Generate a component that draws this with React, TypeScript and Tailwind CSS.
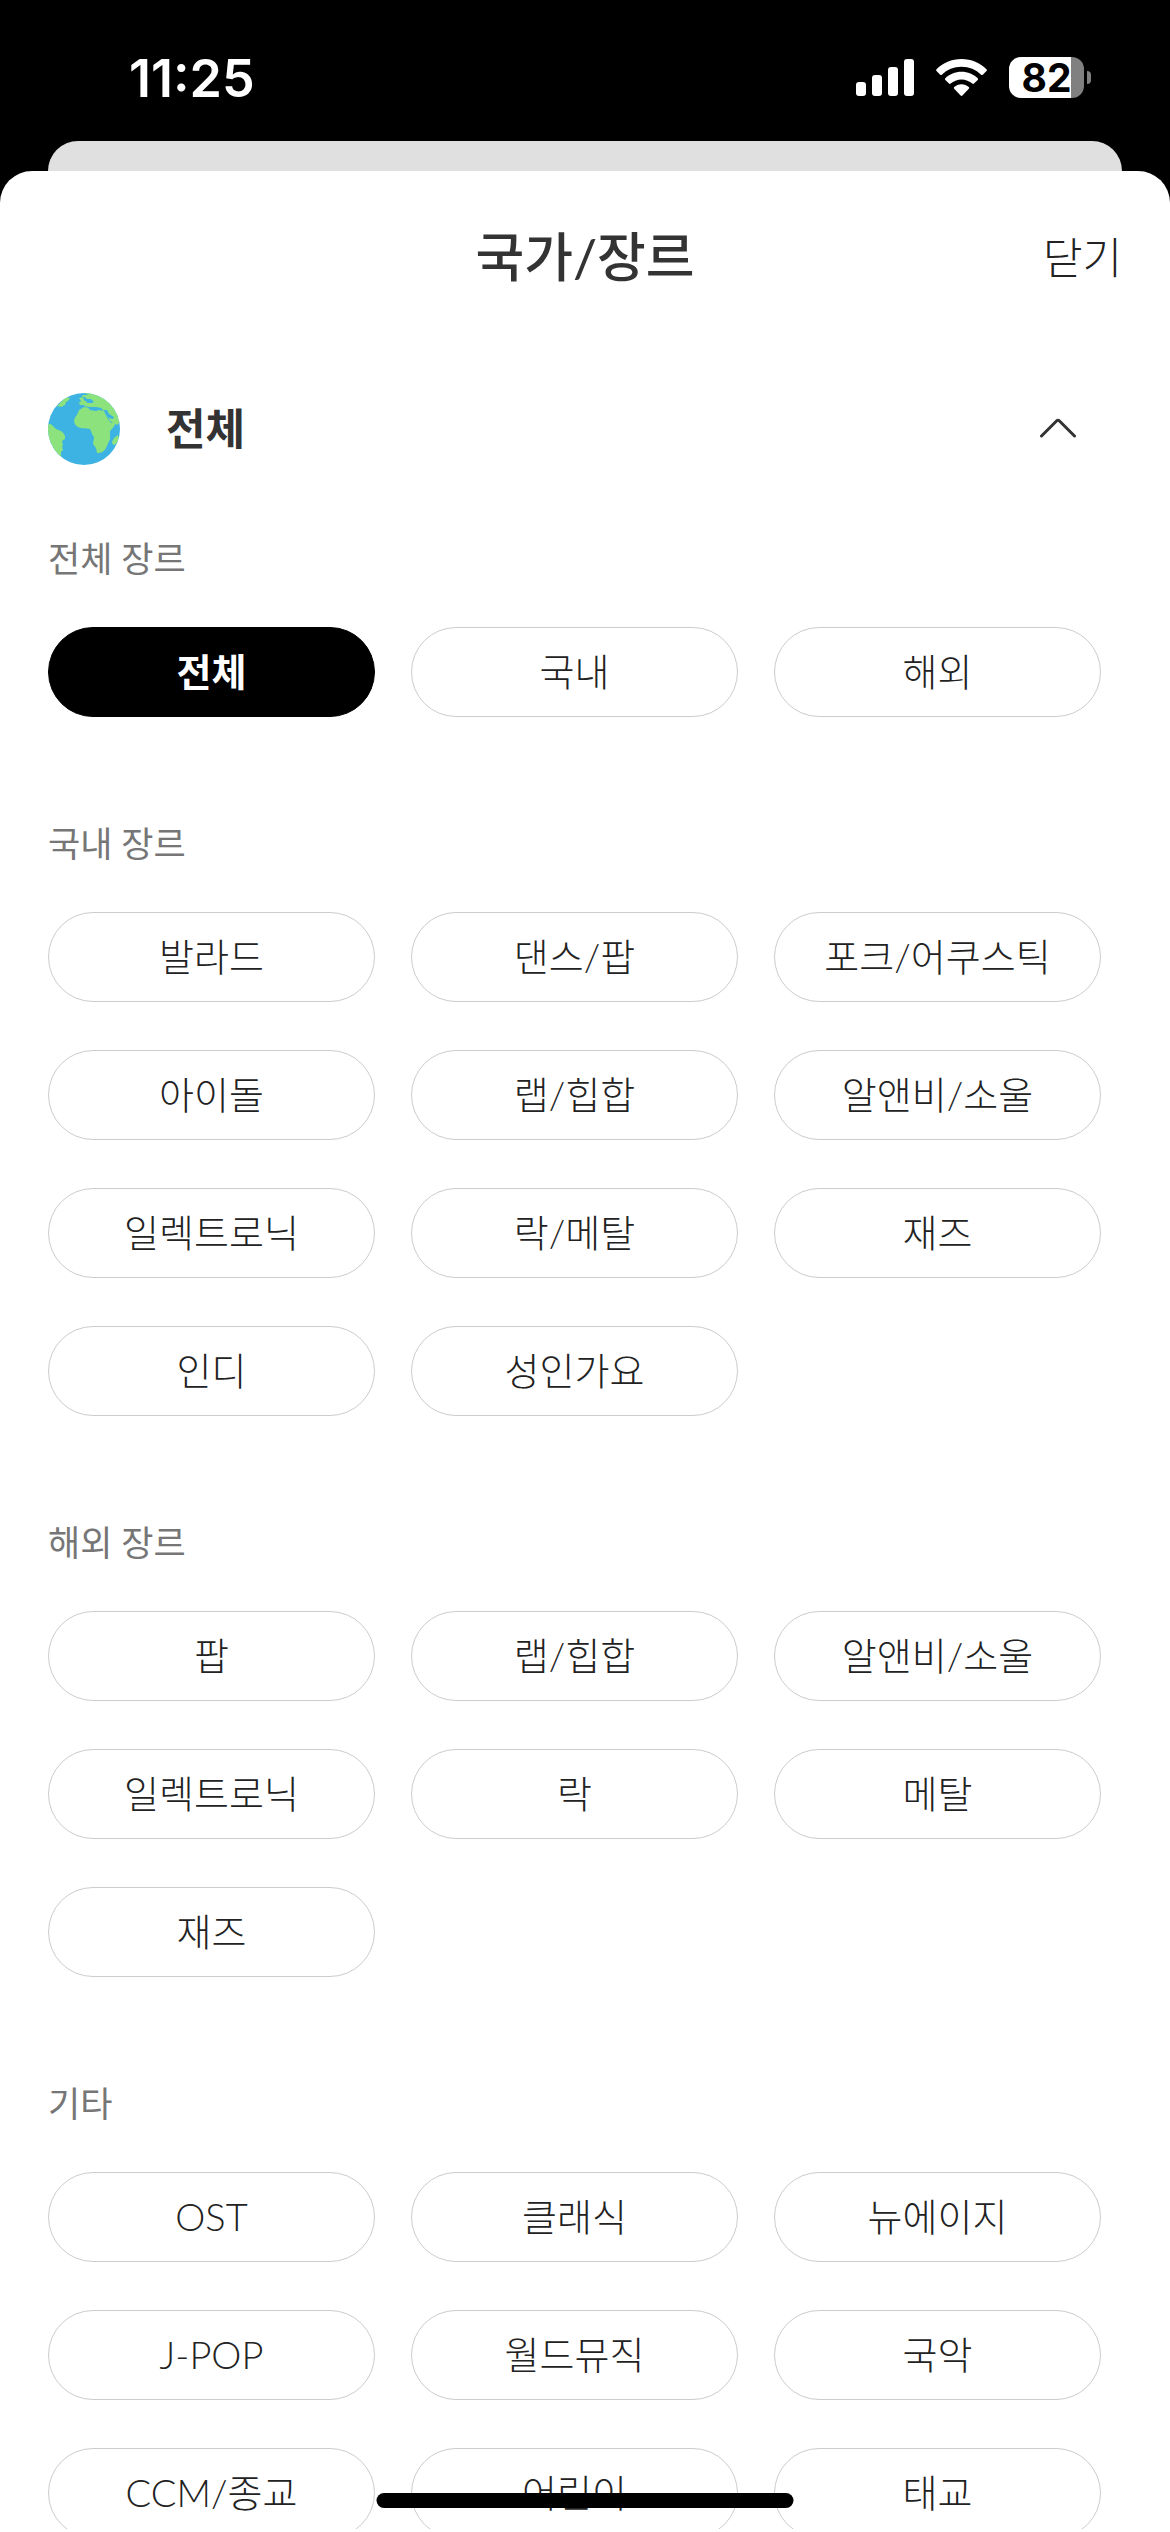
import React, { useState } from "react";

interface GenreGroup {
  title: string;
  genres: string[];
}

const GROUPS: GenreGroup[] = [
  { title: "전체 장르", genres: ["전체", "국내", "해외"] },
  {
    title: "국내 장르",
    genres: [
      "발라드",
      "댄스/팝",
      "포크/어쿠스틱",
      "아이돌",
      "랩/힙합",
      "알앤비/소울",
      "일렉트로닉",
      "락/메탈",
      "재즈",
      "인디",
      "성인가요",
    ],
  },
  {
    title: "해외 장르",
    genres: ["팝", "랩/힙합", "알앤비/소울", "일렉트로닉", "락", "메탈", "재즈"],
  },
  {
    title: "기타",
    genres: [
      "OST",
      "클래식",
      "뉴에이지",
      "J-POP",
      "월드뮤직",
      "국악",
      "CCM/종교",
      "어린이",
      "태교",
    ],
  },
];

const StatusBar: React.FC = () => (
  <div className="flex h-[141px] shrink-0 items-start justify-between pt-[49px] pl-[129px] pr-[79px] font-['Inter',sans-serif] text-white">
    <span className="text-[52px] leading-[60px] font-semibold">11:25</span>
    <div className="flex items-center gap-[22px] pt-2">
      <svg width="58" height="38" viewBox="0 0 58 38" fill="currentColor">
        <rect x="0" y="23" width="10" height="14" rx="3" />
        <rect x="16" y="16" width="10" height="21" rx="3" />
        <rect x="32" y="8" width="10" height="29" rx="3" />
        <rect x="48" y="0" width="10" height="37" rx="3" />
      </svg>
      <svg width="51" height="38" viewBox="0 0 51 38" fill="currentColor">
        <path d="M25.5 0C35.300 0 44.200 3.900 50.500 10.300c.5.5.5 1.200 0 1.700l-3.700 3.700c-.5.5-1.200.5-1.700 0C40 10.700 33.200 7.800 25.500 7.800S11 10.700 5.900 15.700c-.5.5-1.200.5-1.700 0L.5 12c-.5-.5-.5-1.200 0-1.700C6.800 3.900 15.700 0 25.500 0Z" />
        <path d="M25.500 12.700c6.300 0 12 2.500 16.200 6.500.5.5.5 1.200 0 1.700L38 24.600c-.5.5-1.200.5-1.700 0-2.800-2.600-6.600-4.200-10.800-4.200s-8 1.600-10.800 4.200c-.5.5-1.200.5-1.700 0l-3.700-3.700c-.5-.5-.5-1.200 0-1.700 4.200-4 9.900-6.500 16.200-6.500Z" />
        <path d="M25.500 25.300c2.800 0 5.400 1.100 7.300 2.800.5.5.5 1.200 0 1.700l-6.400 6.700c-.5.5-1.300.5-1.800 0l-6.400-6.700c-.5-.5-.5-1.200 0-1.700 1.900-1.700 4.500-2.800 7.300-2.800Z" />
      </svg>
      <div className="flex items-center gap-[3px]">
        <div className="flex h-[41px] w-[75px] items-center justify-center rounded-[12px] bg-[linear-gradient(to_right,#fff_62px,#808080_62px)] text-[39px] leading-[40px] font-bold text-black">
          82
        </div>
        <div className="h-[13px] w-1 rounded-r-full bg-[#808080]"></div>
      </div>
    </div>
  </div>
);

const Globe: React.FC = () => (
  <svg width="72" height="72" viewBox="0 0 72 72" aria-hidden="true">
    <defs>
      <clipPath id="globe">
        <circle cx="36" cy="36" r="36" />
      </clipPath>
    </defs>
    <g clipPath="url(#globe)">
      <rect width="72" height="72" fill="#3cb3e2" />
      <g fill="#8ce27d">
        <path d="M8 14 18 4l4 1-2 3-2 1-1 3-4 2-3-1Z" />
        <path d="M-1 31c3 0 5 0 7 3l2 2 5 2c2 1 3 3 4 5l0 3-3 2 1 4-1 2 1 3-2 2 0 5C7 60 1 50-1 36Z" />
        <path d="M36 0h8c4 1 8 2 11 4 6 4 11 9 14 16l3 9-3 3-7-4-4-8-5-5-5-1-3 0-4 0-5-1 2-3 6 0 2-1-3-3-4 0-2-2-3 0 1-2 6 0Z" />
        <path d="m31 5 4-1 1 3 3 2-1 3-6 0-1-2 2-2Z" />
        <path d="M36 14c3 0 5 1 6 3l6 1 3-1 5 1 4 8 3 4 5-2c-1 5-4 8-6 10l0 8-4 9c-2 4-5 5-9 5l-1-5-3-4 1-7-2-3-1-3-1-2c-4-1-9 0-12-2-5-3-5-8-1-12l2-5Z" />
        <path d="m70 42 1 4-3 5-3 1-1-3 2-4Z" />
      </g>
      <path d="m56 17 3 0 2 4 5 3-1 2-4-1-4-5Z" fill="#3cb3e2" />
    </g>
  </svg>
);

interface ChipProps {
  label: string;
  selected: boolean;
  onSelect: () => void;
}

const Chip: React.FC<ChipProps> = ({ label, selected, onSelect }) => (
  <button
    type="button"
    aria-pressed={selected}
    onClick={onSelect}
    className={`flex h-[90px] items-center justify-center rounded-full border pb-[3px] text-[38px] leading-[48px] ${
      selected
        ? "border-black bg-black font-bold text-white"
        : "border-[#ccc] bg-white font-light text-[#222]"
    }`}
  >
    {label}
  </button>
);

export default function App() {
  const [open, setOpen] = useState(true);
  const [selected, setSelected] = useState("전체 장르-전체");

  return (
    <div className="relative flex h-screen flex-col overflow-hidden bg-black font-['Lato','Noto_Sans_CJK_KR',sans-serif] text-[#333]">
      <StatusBar />

      {/* edge of the page behind the sheet */}
      <div className="mx-12 h-[30px] shrink-0 rounded-t-[30px] bg-[#e0e0e0]"></div>

      <main className="min-h-0 flex-1 overflow-hidden rounded-t-[32px] border-b-[3px] border-white bg-white">
        <header className="grid h-[174px] grid-cols-3 items-center px-12">
          <h1 className="col-start-2 pb-[2px] text-center text-[53px] leading-[72px] font-medium">
            국가/장르
          </h1>
          <button
            type="button"
            className="justify-self-end text-[43px] leading-[60px] font-light text-[#222]"
          >
            닫기
          </button>
        </header>

        <button
          type="button"
          aria-expanded={open}
          onClick={() => setOpen(!open)}
          className="mt-12 flex h-[72px] w-full items-center pl-12 pr-[94px]"
        >
          <Globe />
          <span className="ml-[46px] text-[43px] leading-[60px] font-bold">
            전체
          </span>
          <svg
            className={`ml-auto ${open ? "" : "rotate-180"}`}
            width="36"
            height="22"
            viewBox="0 0 36 22"
            fill="none"
            stroke="currentColor"
            strokeWidth="3"
            strokeLinecap="round"
            strokeLinejoin="round"
          >
            <path d="M1.500 18 16.500 3q1.500-1.500 3 0l15 15" />
          </svg>
        </button>

        {open && (
          <div className="flex flex-col gap-[99px] pt-[66px] pl-12 pr-[69px]">
            {GROUPS.map((group) => (
              <section key={group.title}>
                <h2 className="text-[35px] leading-[54px] font-normal text-[#767676]">
                  {group.title}
                </h2>
                <div className="mt-[42px] grid grid-cols-3 gap-x-9 gap-y-12">
                  {group.genres.map((genre) => {
                    const id = `${group.title}-${genre}`;
                    return (
                      <Chip
                        key={id}
                        label={genre}
                        selected={selected === id}
                        onSelect={() => setSelected(id)}
                      />
                    );
                  })}
                </div>
              </section>
            ))}
          </div>
        )}
      </main>

      {/* home indicator */}
      <div className="absolute bottom-6 left-1/2 h-[15px] w-[417px] -translate-x-1/2 rounded-full bg-black"></div>
    </div>
  );
}
